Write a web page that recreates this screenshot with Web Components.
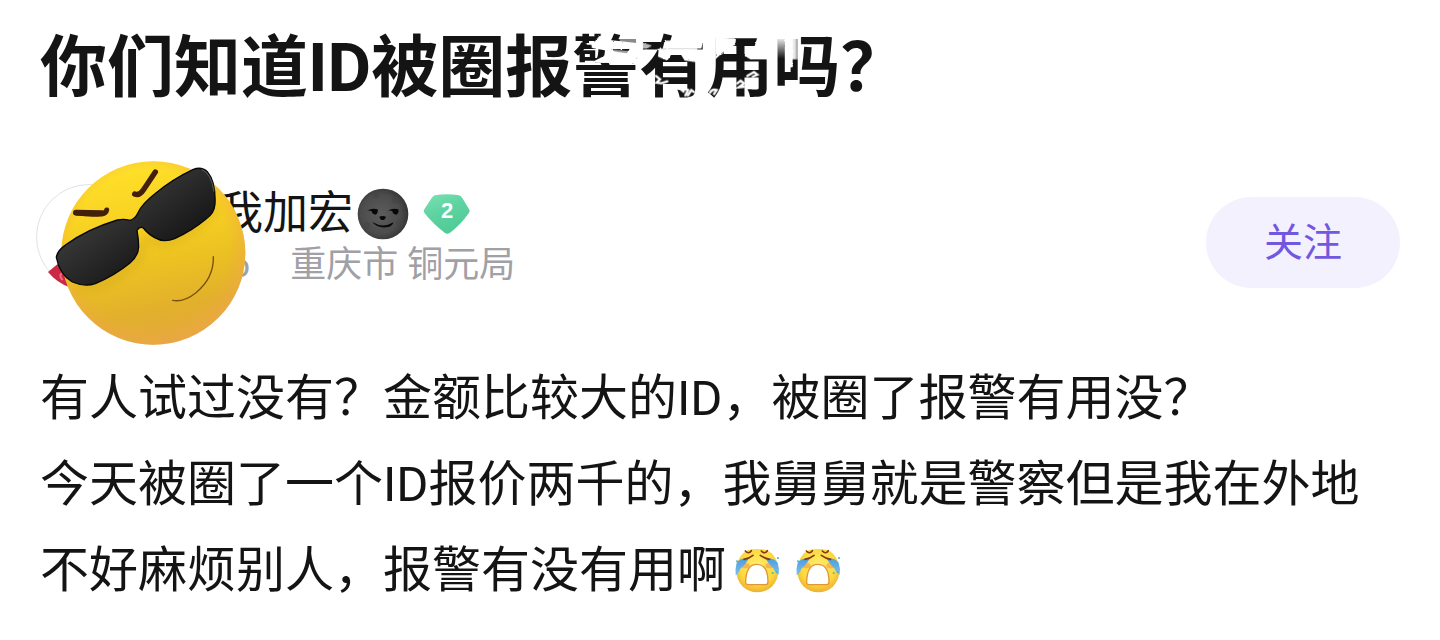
<!DOCTYPE html>
<html lang="zh-CN">
<head>
<meta charset="utf-8">
<meta name="viewport" content="width=device-width, initial-scale=1">
<title>你们知道ID被圈报警有用吗？</title>
<style>
  body {
    margin: 0;
    background: #fff;
    color: #141414;
    font-family: Roboto, "Noto Sans CJK SC", sans-serif;
  }
</style>
</head>
<body>
<forum-post>
  <post-title slot="title">你们知道ID被圈报警有用吗？</post-title>
  <post-author slot="author" level="2">
    <span slot="name">我加宏</span>
    <span slot="time">6</span>
    <span slot="place">重庆市 铜元局</span>
    <follow-button slot="action">关注</follow-button>
  </post-author>
  <post-body slot="body">
    <p>有人试过没有？金额比较大的ID，被圈了报警有用没？</p>
    <p>今天被圈了一个ID报价两千的，我舅舅就是警察但是我在外地不好麻烦别人，报警有没有用啊<cry-face></cry-face><cry-face></cry-face></p>
  </post-body>
</forum-post>

<script>
class ForumPost extends HTMLElement {
  constructor() {
    super();
    this.attachShadow({ mode: 'open' }).innerHTML = `
      <style>
        :host {
          display: block;
          padding: 22px 40px 24px;
        }
        article {
          display: flex;
          flex-direction: column;
        }
      </style>
      <article>
        <slot name="title"></slot>
        <slot name="author"></slot>
        <slot name="body"></slot>
      </article>`;
  }
}

class PostTitle extends HTMLElement {
  constructor() {
    super();
    this.attachShadow({ mode: 'open' }).innerHTML = `
      <style>
        :host { display: block; }
        h1 {
          position: relative;
          margin: 0;
          font-size: 67px;
          line-height: 92px;
          font-weight: 700;
        }
        svg {
          position: absolute;
          left: 520px;
          top: 0;
          width: 330px;
          height: 90px;
        }
      </style>
      <h1><slot></slot>
        <svg viewBox="0 6 990 270" fill="#fff" aria-hidden="true">
          <defs>
            <filter id="rough" x="-10%" y="-20%" width="120%" height="140%">
              <feTurbulence type="fractalNoise" baseFrequency="0.12" numOctaves="2" seed="4"/>
              <feDisplacementMap in="SourceGraphic" scale="7" xChannelSelector="R" yChannelSelector="G"/>
            </filter>
            <linearGradient id="fade">
              <stop offset="0" stop-color="#fff"/>
              <stop offset=".4" stop-color="#fff" stop-opacity=".9"/>
              <stop offset="1" stop-color="#fff" stop-opacity="0"/>
            </linearGradient>
            <linearGradient id="fade-down" x1="0" y1="0" x2="0" y2="1">
              <stop offset="0" stop-color="#fff"/>
              <stop offset="1" stop-color="#fff" stop-opacity="0"/>
            </linearGradient>
          </defs>
          <g filter="url(#rough)">
            <path d="M128 36L162 40L150 60L236 70V86L162 88L122 74L100 70Z"/>
            <path d="M92 66L160 74L158 94L232 104L234 130L92 128L132 108L142 92L96 84Z"/>
            <path d="M176 54L236 50V72L182 70Z" opacity=".5"/>
            <path d="M160 90L226 94V110L160 106Z" opacity=".6"/>
            <path d="M314 62H430L424 86H308Z"/>
            <path d="M246 68L276 76L262 86L246 86Z" opacity=".7"/>
            <path d="M296 86H412L408 126L374 122L362 102L336 100L322 122L294 110Z"/>
            <path d="M466 50L528 56L526 74L490 96L466 118Z"/>
            <path d="M556 94L582 84L592 52L626 46V118H572L554 108Z"/>
            <path d="M674 54H698V142H676V96Z"/>
          </g>
          <path d="M650 50H680V116H650Z" fill="url(#fade-down)"/>
          <path d="M690 50H726V118H690Z" fill="url(#fade)"/>
          <g fill="none" stroke="#fff" stroke-width="7" stroke-linecap="round">
            <path d="M288 168L300 178L290 188L304 190L322 184"/>
            <path d="M362 208L370 214L374 206L384 210L376 226M384 226L394 210L402 216"/>
            <path d="M450 218Q456 206 470 210L462 222"/>
            <path d="M532 190L542 182L552 190L536 202L552 200"/>
            <path d="M562 168L582 156L592 164L578 170"/>
          </g>
        </svg>
      </h1>`;
  }
}

class PostAuthor extends HTMLElement {
  constructor() {
    super();
    this.attachShadow({ mode: 'open' }).innerHTML = `
      <style>
        :host {
          display: flex;
          align-items: center;
          justify-content: space-between;
          margin: 70px 0 66px;
        }
        .who {
          display: flex;
          align-items: center;
          gap: 76px;
          margin-left: -4px;
        }
        .name, .meta {
          display: flex;
          align-items: center;
        }
        .name {
          font-size: 45px;
          line-height: 56px;
        }
        .meta {
          gap: 40px;
          padding-left: 12px;
          color: #a0a0a6;
          font-size: 36px;
          line-height: 46px;
        }
        level-badge { margin-left: 14px; }
        moon-face { margin-left: 4px; }
      </style>
      <div class="who">
        <user-avatar></user-avatar>
        <div>
          <div class="name">
            <slot name="name"></slot>
            <moon-face></moon-face>
            <level-badge>${this.getAttribute('level') ?? '1'}</level-badge>
          </div>
          <div class="meta">
            <slot name="time"></slot>
            <slot name="place"></slot>
          </div>
        </div>
      </div>
      <slot name="action"></slot>`;
  }
}

class UserAvatar extends HTMLElement {
  constructor() {
    super();
    this.attachShadow({ mode: 'open' }).innerHTML = `
      <style>
        :host {
          display: block;
          position: relative;
          box-sizing: border-box;
          width: 106px;
          height: 106px;
          border: 1px solid #e2e2e5;
          border-radius: 50%;
        }
        svg {
          position: absolute;
          left: -17px;
          top: -35px;
          width: 250px;
          height: 210px;
        }
      </style>
      <svg viewBox="0 0 750 630" aria-hidden="true">
        <defs>
          <linearGradient id="skin" x1=".4" y1="0" x2=".6" y2="1">
            <stop offset="0" stop-color="#ffe12a"/>
            <stop offset=".3" stop-color="#f8d222"/>
            <stop offset=".55" stop-color="#ecc222"/>
            <stop offset=".8" stop-color="#e2b02c"/>
            <stop offset="1" stop-color="#e3a83c"/>
          </linearGradient>
          <radialGradient id="rim" cx=".48" cy=".47" r=".53">
            <stop offset=".8" stop-color="#f3a63c" stop-opacity="0"/>
            <stop offset="1" stop-color="#f0a550" stop-opacity=".5"/>
          </radialGradient>
          <linearGradient id="lens" x1="0" y1="0" x2="1" y2="1">
            <stop offset="0" stop-color="#111"/>
            <stop offset=".35" stop-color="#363636"/>
            <stop offset=".65" stop-color="#1c1c1c"/>
            <stop offset="1" stop-color="#050505"/>
          </linearGradient>
          <filter id="soft" x="-20%" y="-20%" width="140%" height="140%">
            <feGaussianBlur stdDeviation="12"/>
          </filter>
          <clipPath id="face"><ellipse cx="400" cy="309" rx="276" ry="275"/></clipPath>
        </defs>
        <path d="M84 366L112 343L160 350L150 412Q112 400 84 366Z" fill="#cb2946"/>
        <path d="M132 364Q112 376 128 390" fill="none" stroke="#ef6e80" stroke-width="6"/>
        <ellipse cx="400" cy="309" rx="276" ry="275" fill="url(#skin)"/>
        <ellipse cx="400" cy="309" rx="276" ry="275" fill="url(#rim)"/>
        <g clip-path="url(#face)">
          <path d="M170 412Q270 420 360 320Q372 240 425 282Q520 260 590 170" fill="none" stroke="#b98b12" stroke-width="14" opacity=".35" filter="url(#soft)"/>
        </g>
        <path d="M168 188Q210 196 246 191Q258 190 260 180" fill="none" stroke="#43200b" stroke-width="15" stroke-linecap="round" stroke-linejoin="round"/>
        <path d="M168 188L246 190" fill="none" stroke="#43200b" stroke-width="18" stroke-linecap="round"/>
        <path d="M344 132Q358 138 370 120L406 66" fill="none" stroke="#43200b" stroke-width="16" stroke-linecap="round" stroke-linejoin="round"/>
        <path d="M109 322Q112 302 135 286Q200 238 292 210Q312 206 330 211Q346 206 354 188Q366 162 404 132Q456 88 520 58Q545 49 562 65Q588 96 585 162Q583 190 558 207Q515 243 464 266Q430 279 404 263Q382 250 370 234Q359 228 351 241Q356 268 356 290Q355 318 330 339Q285 376 226 401Q194 412 157 396Q119 374 109 322Z" fill="url(#lens)" stroke="#080808" stroke-width="4"/>
        <path d="M545 58Q575 72 582 125" fill="none" stroke="#85858a" stroke-width="3" opacity=".6"/>
        <path d="M458 451Q490 458 528 428Q582 383 580 320" fill="none" stroke="#76500f" stroke-width="4" stroke-linecap="round"/>
      </svg>`;
  }
}

class MoonFace extends HTMLElement {
  constructor() {
    super();
    this.attachShadow({ mode: 'open' }).innerHTML = `
      <style>
        :host, svg {
          display: block;
          width: 52px;
          height: 52px;
        }
      </style>
      <svg viewBox="0 0 156 156" aria-hidden="true">
        <defs>
          <radialGradient id="g" cx=".45" cy=".5" r=".55">
            <stop offset="0" stop-color="#5c5c5c"/>
            <stop offset=".7" stop-color="#4c4c4c"/>
            <stop offset="1" stop-color="#353535"/>
          </radialGradient>
        </defs>
        <circle cx="78" cy="78" r="76" fill="url(#g)"/>
        <g fill="#444" opacity=".5">
          <circle cx="116" cy="36" r="12"/><circle cx="128" cy="106" r="11"/>
          <circle cx="30" cy="112" r="10"/><circle cx="58" cy="24" r="8"/>
        </g>
        <g fill="#080808">
          <path d="M30 69Q44 59 62 64Q64 76 56 80Q46 80 44 70Q38 66 30 69Z"/>
          <path d="M92 69Q106 59 124 64Q127 76 118 80Q108 80 106 70Q100 66 92 69Z"/>
          <path d="M67 86Q77 82 87 86Q84 96 77 96Q70 96 67 86Z"/>
          <path d="M46 102Q78 122 109 103Q108 113 94 117Q62 123 46 102Z"/>
        </g>
      </svg>`;
  }
}

class LevelBadge extends HTMLElement {
  constructor() {
    super();
    this.attachShadow({ mode: 'open' }).innerHTML = `
      <style>
        :host {
          display: grid;
          width: 48px;
          height: 40px;
        }
        svg, span { grid-area: 1 / 1; }
        span {
          justify-self: center;
          color: #fff;
          font: 700 22px/34px "Liberation Sans", sans-serif;
        }
      </style>
      <svg viewBox="0 0 144 120" aria-hidden="true">
        <defs>
          <linearGradient id="gem" x1="0" y1="0" x2=".5" y2="1">
            <stop offset="0" stop-color="#7be1b3"/>
            <stop offset=".5" stop-color="#5ed3a1"/>
            <stop offset="1" stop-color="#4fcb97"/>
          </linearGradient>
        </defs>
        <path d="M36 4Q72 -3 108 4Q114 6 118 12L138 46Q142 52 137 58Q112 94 80 117Q73 122 66 117Q30 90 5 58Q0 52 4 46L26 12Q30 6 36 4Z" fill="url(#gem)"/>
      </svg>
      <span><slot></slot></span>`;
  }
}

class FollowButton extends HTMLElement {
  constructor() {
    super();
    this.attachShadow({ mode: 'open' }).innerHTML = `
      <style>
        :host {
          display: block;
          padding-top: 10px;
        }
        button {
          display: block;
          border: 0;
          border-radius: 46px;
          padding: 1px 58px 0;
          background: #f3f1fe;
          color: #7258df;
          font: inherit;
          font-size: 39px;
          line-height: 90px;
          cursor: pointer;
        }
      </style>
      <button type="button"><slot></slot></button>`;
  }
}

class PostBody extends HTMLElement {
  constructor() {
    super();
    this.attachShadow({ mode: 'open' }).innerHTML = `
      <style>
        :host {
          display: block;
          font-size: 49px;
          line-height: 86px;
        }
        ::slotted(p) { margin: 0; }
      </style>
      <slot></slot>`;
  }
}

class CryFace extends HTMLElement {
  constructor() {
    super();
    this.attachShadow({ mode: 'open' }).innerHTML = `
      <style>
        :host {
          display: inline-block;
          width: 45px;
          height: 45px;
          margin: 0 7px 0 9px;
          vertical-align: -6px;
        }
        svg { display: block; }
      </style>
      <svg viewBox="0 0 135 135" aria-hidden="true">
        <defs>
          <radialGradient id="y" cx=".5" cy=".4" r=".6">
            <stop offset="0" stop-color="#ffef70"/>
            <stop offset=".7" stop-color="#fcd83c"/>
            <stop offset="1" stop-color="#eeb034"/>
          </radialGradient>
          <linearGradient id="tear" x1="0" y1="0" x2="0" y2="1">
            <stop offset="0" stop-color="#4b9ce0"/>
            <stop offset="1" stop-color="#7cc0ee"/>
          </linearGradient>
        </defs>
        <path d="M40 6Q67 0 94 6Q129 22 130 70A63 63 0 0 1 4 70Q5 22 40 6Z" fill="url(#y)"/>
        <ellipse cx="32" cy="53" rx="12" ry="8" fill="#f69b4b" opacity=".65"/>
        <ellipse cx="103" cy="53" rx="12" ry="8" fill="#f69b4b" opacity=".65"/>
        <path d="M42 31Q17 29 5 44Q0 62 2 82Q11 78 16 62Q28 54 42 31Z" fill="url(#tear)"/>
        <path d="M91 31Q116 29 128 44Q134 62 131 80Q121 76 116 62Q106 54 91 31Z" fill="url(#tear)"/>
        <g fill="none" stroke="#823b12" stroke-width="5" stroke-linecap="round">
          <path d="M31 9Q41 20 49 8M79 9Q89 20 97 8"/>
          <path d="M27 34Q43 31 54 22M76 22Q88 31 104 34"/>
        </g>
        <path d="M65 49C88 49 99 67 99 101Q99 110 91 110H39Q31 110 32 101C33 67 43 49 65 49Z" fill="#fff" stroke="#e39732" stroke-width="4"/>
        <g fill="#53b1bd">
          <circle cx="6" cy="40" r="3"/><circle cx="109" cy="37" r="3"/><circle cx="129" cy="30" r="3"/>
          <circle cx="113" cy="75" r="3"/><circle cx="125" cy="72" r="3"/>
        </g>
      </svg>`;
  }
}

customElements.define('forum-post', ForumPost);
customElements.define('post-title', PostTitle);
customElements.define('user-avatar', UserAvatar);
customElements.define('moon-face', MoonFace);
customElements.define('level-badge', LevelBadge);
customElements.define('follow-button', FollowButton);
customElements.define('post-author', PostAuthor);
customElements.define('post-body', PostBody);
customElements.define('cry-face', CryFace);
</script>
</body>
</html>
